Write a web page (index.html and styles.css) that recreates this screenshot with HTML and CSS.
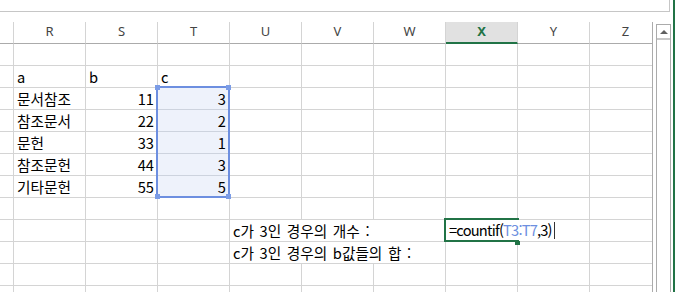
FILE: index.html
```html
<!DOCTYPE html>
<html lang="ko">
<head>
<meta charset="utf-8">
<title>Sheet</title>
<link rel="stylesheet" href="styles.css">
</head>
<body>
<div class="app">
  <div class="left">
    <div class="topbar"></div>
    <div class="main">
      <div class="sheet">
        <div class="grid">
          <div class="c h"></div><div class="c h">R</div><div class="c h">S</div><div class="c h">T</div><div class="c h">U</div><div class="c h">V</div><div class="c h">W</div><div class="c h hx">X</div><div class="c h">Y</div><div class="c h">Z</div>

          <div class="c"></div><div class="c"></div><div class="c"></div><div class="c"></div><div class="c"></div><div class="c"></div><div class="c"></div><div class="c"></div><div class="c"></div><div class="c"></div>

          <div class="c"></div><div class="c">a</div><div class="c">b</div><div class="c">c</div><div class="c"></div><div class="c"></div><div class="c"></div><div class="c"></div><div class="c"></div><div class="c"></div>

          <div class="c"></div><div class="c">문서참조</div><div class="c n">11</div><div class="c n sel">3</div><div class="c"></div><div class="c"></div><div class="c"></div><div class="c"></div><div class="c"></div><div class="c"></div>

          <div class="c"></div><div class="c">참조문서</div><div class="c n">22</div><div class="c n sel">2</div><div class="c"></div><div class="c"></div><div class="c"></div><div class="c"></div><div class="c"></div><div class="c"></div>

          <div class="c"></div><div class="c">문헌</div><div class="c n">33</div><div class="c n sel">1</div><div class="c"></div><div class="c"></div><div class="c"></div><div class="c"></div><div class="c"></div><div class="c"></div>

          <div class="c"></div><div class="c">참조문헌</div><div class="c n">44</div><div class="c n sel">3</div><div class="c"></div><div class="c"></div><div class="c"></div><div class="c"></div><div class="c"></div><div class="c"></div>

          <div class="c"></div><div class="c">기타문헌</div><div class="c n">55</div><div class="c n sel">5</div><div class="c"></div><div class="c"></div><div class="c"></div><div class="c"></div><div class="c"></div><div class="c"></div>

          <div class="c"></div><div class="c"></div><div class="c"></div><div class="c"></div><div class="c"></div><div class="c"></div><div class="c"></div><div class="c"></div><div class="c"></div><div class="c"></div>

          <div class="c"></div><div class="c"></div><div class="c"></div><div class="c"></div><div class="c span3">c가 3인 경우의 개수 :</div><div class="c"></div><div class="c"></div><div class="c"></div>

          <div class="c"></div><div class="c"></div><div class="c"></div><div class="c"></div><div class="c span3">c가 3인 경우의 b값들의 합 :</div><div class="c"></div><div class="c"></div><div class="c"></div>

          <div class="c"></div><div class="c"></div><div class="c"></div><div class="c"></div><div class="c"></div><div class="c"></div><div class="c"></div><div class="c"></div><div class="c"></div><div class="c"></div>

          <div class="c"></div><div class="c"></div><div class="c"></div><div class="c"></div><div class="c"></div><div class="c"></div><div class="c"></div><div class="c"></div><div class="c"></div><div class="c"></div>
        </div>

        <div class="selection"></div>
        <div class="handle hl ht"></div>
        <div class="handle hr ht"></div>
        <div class="handle hl hb"></div>
        <div class="handle hr hb"></div>

        <div class="active"></div>
        <div class="edit">=countif(<span class="ref">T3:T7</span>,3)<span class="caret"></span></div>
        <div class="fill"></div>
      </div>
      <div class="vscroll">
        <div class="vbtn"><span class="tri"></span></div>
      </div>
    </div>
  </div>
  <div class="green"></div>
</div>
</body>
</html>
```

FILE: styles.css
```css
html, body {
  margin: 0;
  padding: 0;
  background: #fff;
}

.app {
  width: 675px;
  height: 292px;
  overflow: hidden;
  display: flex;
}

.left {
  width: 673px;
}

.green {
  width: 2px;
  height: 292px;
  background: #217346;
}

.topbar {
  width: 670px;
  height: 12px;
  box-sizing: border-box;
  border-right: 1px solid #c6c6c6;
  border-bottom: 1px solid #c6c6c6;
}

.main {
  display: flex;
  margin-top: 10px;
}

.sheet {
  position: relative;
  width: 653px;
  height: 270px;
  box-sizing: border-box;
  border-right: 1px solid #ababab;
  overflow: hidden;
}

.grid {
  display: grid;
  grid-template-columns: 14px repeat(9, 72px);
  grid-auto-rows: 22px;
  width: 662px;
}

.c {
  box-sizing: border-box;
  border-right: 1px solid #d4d4d4;
  border-bottom: 1px solid #d4d4d4;
  padding: 0 3px;
  font-family: "Noto Sans CJK KR", "Noto Sans", sans-serif;
  font-size: 14.67px;
  line-height: 21px;
  color: #000;
  white-space: nowrap;
  overflow: hidden;
}

.h {
  border-bottom-color: #ababab;
  font-family: "Noto Sans", "Open Sans", sans-serif;
  font-size: 13px;
  line-height: 19px;
  color: #444;
  text-align: center;
  padding: 0;
}

.hx {
  background: #e1e1e1;
  border-bottom: 2px solid #217346;
  color: #217346;
  font-weight: bold;
}

.n {
  text-align: right;
}

.sel {
  background: #eef2fb;
  border-bottom-color: #cdd3de;
}

.span3 {
  grid-column: span 3;
  word-spacing: 1.5px;
}

.selection {
  position: absolute;
  left: 156px;
  top: 64px;
  width: 74px;
  height: 112px;
  box-sizing: border-box;
  border: 2px solid #6d8fe0;
}

.handle {
  position: absolute;
  width: 5px;
  height: 5px;
  background: #7b9ce6;
}

.hl { left: 155px; }
.hr { left: 226px; }
.ht { top: 63px; }
.hb { top: 172px; }

.active {
  position: absolute;
  left: 444px;
  top: 196px;
  width: 75px;
  height: 24px;
  box-sizing: border-box;
  border: 2px solid #217346;
}

.edit {
  position: absolute;
  left: 446px;
  top: 198px;
  width: 120px;
  height: 20px;
  background: #fff;
  padding-left: 3px;
  box-sizing: border-box;
  font-family: "Noto Sans CJK KR", "Noto Sans", sans-serif;
  font-size: 14.67px;
  line-height: 20px;
  letter-spacing: -0.8px;
  color: #000;
  white-space: nowrap;
}

.ref {
  color: #6d8fe0;
}

.caret {
  display: inline-block;
  width: 1px;
  height: 17px;
  background: #333;
  margin-left: 2px;
  vertical-align: -3px;
}

.fill {
  position: absolute;
  left: 515px;
  top: 219px;
  width: 5px;
  height: 4px;
  background: #217346;
}

.vscroll {
  margin-left: 3px;
  margin-top: 2px;
  width: 15px;
  height: 268px;
  box-sizing: border-box;
  border: 1px solid #ababab;
  border-bottom: none;
}

.vbtn {
  height: 15px;
  box-sizing: border-box;
  border-bottom: 2px solid #c8c8c8;
  display: flex;
  align-items: center;
  justify-content: center;
}

.tri {
  width: 0;
  height: 0;
  border-left: 4px solid transparent;
  border-right: 4px solid transparent;
  border-bottom: 4px solid #606060;
}
```
